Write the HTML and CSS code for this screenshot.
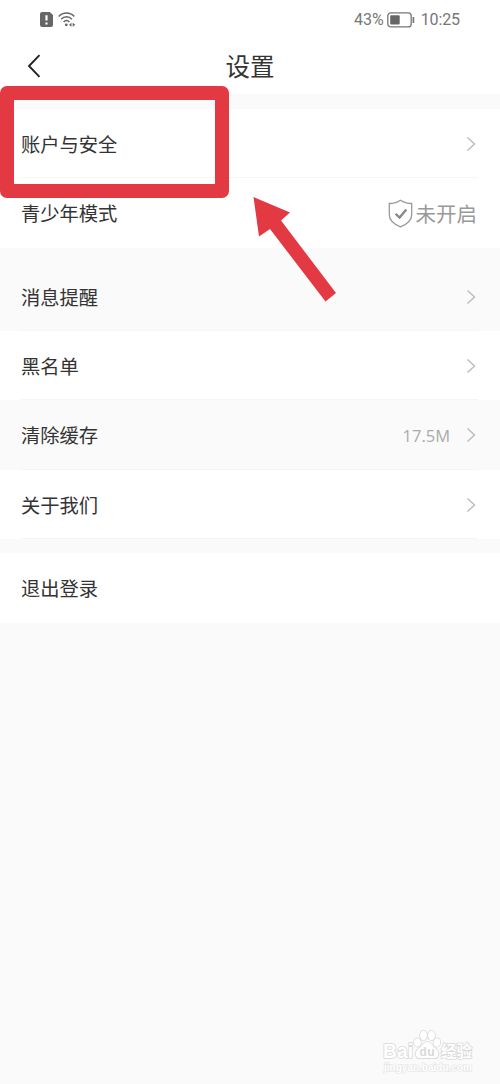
FILE: index.html
```html
<!DOCTYPE html>
<html lang="zh-CN">
<head>
<meta charset="utf-8">
<title>设置</title>
<link rel="stylesheet" href="styles.css">
</head>
<body>
<div class="screen">
  <div class="status">
    <div class="status-left">
      <svg width="13" height="15" viewBox="0 0 12 15" preserveAspectRatio="none"><path d="M2 0h7l3 3v10a2 2 0 0 1-2 2H2a2 2 0 0 1-2-2V2a2 2 0 0 1 2-2z" fill="#666"/><path d="M6 3.200v5.300M6 10.400v2" stroke="#fff" stroke-width="2"/></svg>
      <svg width="18" height="15" viewBox="0 0 18 15" fill="none" stroke="#666" stroke-width="1.500"><path d="M.7 4.400C5-.2 12-.2 16.300 4.400M3.200 7.200c3-3.200 7.700-3.200 10.700 0M5.600 9.900c1.700-1.800 4.100-1.800 5.800 0"/><circle cx="8.300" cy="12.800" r="1.400" fill="#666" stroke="none"/><path d="M13.500 10.700v4L11 12.700zM14.700 10.700v4l2.600-2z" fill="#666" stroke="none"/></svg>
    </div>
    <div class="status-right">
      <span class="percent">43%</span>
      <svg width="28" height="16" viewBox="0 0 28 16"><rect x=".8" y=".9" width="23.400" height="14" rx="3" fill="none" stroke="#777" stroke-width="1.300"/><rect x="3.200" y="3.200" width="9.500" height="9.400" rx="1" fill="#666"/><path d="M26.400 5v6" stroke="#777" stroke-width="1.700"/></svg>
      <span class="clock">10:25</span>
    </div>
  </div>
  <header class="header">
    <svg class="back" width="14" height="24" viewBox="0 0 14 24"><path d="M12.500 1.200 2 12l10.500 10.800" fill="none" stroke="#222" stroke-width="1.900"/></svg>
    <h1 class="title">设置</h1>
  </header>
  <main class="list">
    <div class="row first"><span class="label">账户与安全</span><svg class="chevron" viewBox="0 0 10 16"><path d="M1.500 1.500 8.500 8l-7 6.500"/></svg></div>
    <div class="row last"><span class="label">青少年模式</span>
      <span class="state"><svg width="25" height="29" viewBox="0 0 25 29" fill="none"><path d="M12.500 1.200c3.400 2.300 7 3.200 11.200 3.300v11.200c0 6-5.200 9.700-11.200 12.200-6-2.500-11.200-6.200-11.200-12.200V4.500c4.200-.1 7.800-1 11.200-3.300z" stroke="#999" stroke-width="1.300"/><path d="m7.600 14.700 4 3.900 6.700-8" stroke="#888" stroke-width="2.300"/></svg><span>未开启</span></span>
    </div>
    <div class="row gray notice"><span class="label">消息提醒</span><svg class="chevron" viewBox="0 0 10 16"><path d="M1.500 1.500 8.500 8l-7 6.500"/></svg></div>
    <div class="row"><span class="label">黑名单</span><svg class="chevron" viewBox="0 0 10 16"><path d="M1.500 1.500 8.500 8l-7 6.500"/></svg></div>
    <div class="row gray cache"><span class="label">清除缓存</span><span class="size">17.5M</span><svg class="chevron" viewBox="0 0 10 16"><path d="M1.500 1.500 8.500 8l-7 6.500"/></svg></div>
    <div class="row"><span class="label">关于我们</span><svg class="chevron" viewBox="0 0 10 16"><path d="M1.500 1.500 8.500 8l-7 6.500"/></svg></div>
    <div class="row logout"><span class="label">退出登录</span></div>
  </main>
  <div class="highlight"></div>
  <svg class="arrow" width="90" height="112" viewBox="0 0 90 112"><path d="M3.500 7 40 22.500l-9 8L86 103 75.500 111.500 20 39l-11 7.500z" fill="#e33943"/></svg>
  <div class="watermark">
    <svg class="brand" width="94" height="32" viewBox="0 0 94 32">
      <text class="wm-latin" x="3" y="28.500" textLength="30" lengthAdjust="spacingAndGlyphs">Bai</text>
      <g class="paw"><ellipse cx="37.500" cy="13.500" rx="3.300" ry="4.200" transform="rotate(-15 37.500 13.500)"/><ellipse cx="43.500" cy="6.500" rx="3.500" ry="4.700"/><ellipse cx="51.500" cy="6.500" rx="3.500" ry="4.700"/><ellipse cx="57" cy="13.500" rx="3.300" ry="4.200" transform="rotate(15 57 13.500)"/><path d="M47.300 13c4 0 4.500 3.500 8 6.300 5 4 4 10-1.500 10-3.500 0-9-.5-13 0-6 .5-6.500-6.500-2-10 4-3 4.500-6.300 8.500-6.300z"/></g>
      <text class="wm-du" x="39.500" y="27" textLength="15">du</text>
      <text class="wm-cjk" x="61" y="27.500" textLength="31" lengthAdjust="spacingAndGlyphs">经验</text>
    </svg>
    <svg class="site" width="94" height="14" viewBox="0 0 94 14"><text class="wm-url" x="4" y="9.500" textLength="88" lengthAdjust="spacingAndGlyphs">jingyan.baidu.com</text></svg>
  </div>
</div>
</body>
</html>
```
FILE: styles.css
```css
* { box-sizing: border-box; }
body {
  margin: 0;
  background: #fafafa;
  color: #333;
  font-family: "Noto Sans CJK SC", sans-serif;
}
svg { display: block; flex: none; }
.screen { position: relative; height: 1084px; overflow: hidden; }
.status {
  display: flex;
  justify-content: space-between;
  align-items: center;
  height: 38px;
  padding: 0 40px;
  background: #fff;
  color: #777;
  font: 16px/38px Roboto, sans-serif;
}
.status-left, .status-right { display: flex; align-items: center; }
.status-left { gap: 5px; }
.status-right { gap: 3px; padding-top: 1px; }
.clock { margin-left: 3px; letter-spacing: -.1px; }
.header {
  display: grid;
  grid-template-columns: 60px 1fr 60px;
  align-items: center;
  height: 56px;
  background: #fff;
}
.back { margin-left: 27px; }
.title {
  margin: 0;
  font-size: 24.500px;
  font-weight: 400;
  line-height: 56px;
  text-align: center;
}
.list { padding-top: 15px; }
.row {
  display: flex;
  align-items: center;
  height: 69px;
  padding: 0 24px 0 21px;
  background: #fff;
  background-image: linear-gradient(#f5f5f5, #f5f5f5);
  background-repeat: no-repeat;
  background-size: 457px 1px;
  background-position: 21px 100%;
}
.label { flex: 1; font-size: 19.300px; line-height: 28px; }
.chevron { width: 10px; height: 16px; fill: none; stroke: #bbb; stroke-width: 1.400; }
.last { height: 70px; padding-right: 23px; background-image: none; }
.gray { background-color: #fafafa; }
.notice { height: 83px; padding-top: 14px; }
.cache { height: 70px; }
.logout { height: 70px; margin-top: 14px; background-image: none; }
.state { display: flex; align-items: center; gap: 3px; color: #999; font-size: 20.500px; line-height: 28px; }
.size { margin-right: 16px; color: #aaa; font: 16.500px "Open Sans", sans-serif; }
.highlight {
  position: absolute;
  left: 0;
  top: 86px;
  width: 229px;
  height: 112px;
  border: 14px solid #e33943;
  border-radius: 7px;
}
.arrow { position: absolute; left: 250px; top: 190px; }
.watermark { position: absolute; left: 380px; top: 1029px; }
.watermark text, .paw { fill: #fff; stroke: #d8d8d8; stroke-width: 1.600; paint-order: stroke; }
.wm-latin { font: bold 20px "Liberation Sans", sans-serif; }
.watermark .wm-du { font: bold 12px "Liberation Sans", sans-serif; fill: #d8d8d8; stroke: none; }
.wm-cjk { font: bold 15.500px "Noto Sans CJK SC", sans-serif; }
.watermark .wm-url { font: bold 10px "Liberation Sans", sans-serif; stroke: #e2e2e2; stroke-width: 1.200; }
```
